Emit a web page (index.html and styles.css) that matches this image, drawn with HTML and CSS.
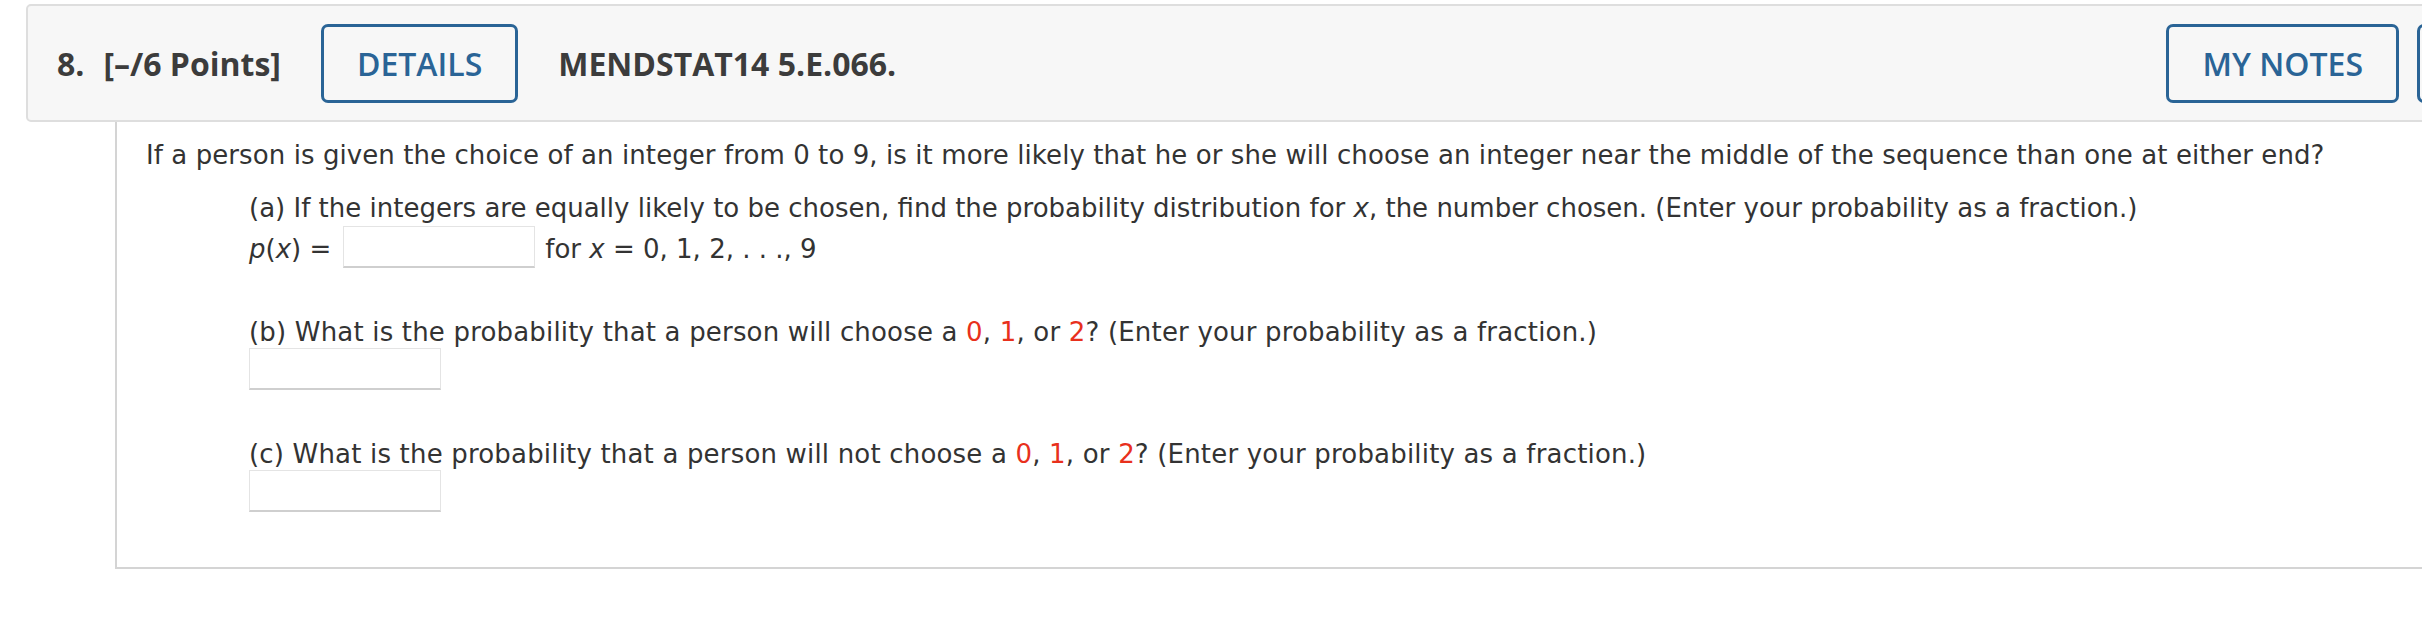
FILE: index.html
```html
<!DOCTYPE html>
<html>
<head>
<meta charset="utf-8">
<title>Question 8</title>
<link rel="stylesheet" href="styles.css">
</head>
<body>
<div class="question">
  <div class="qhead">
    <span class="qnum">8.</span>
    <span class="qpts">[–/6 Points]</span>
    <button class="btn btn-details">DETAILS</button>
    <span class="qcode">MENDSTAT14 5.E.066.</span>
    <div class="tools">
      <button class="btn">MY NOTES</button>
      <button class="btn btn-cut" aria-label="Ask Your Teacher"></button>
    </div>
  </div>
  <div class="qbody">
    <p class="intro">If a person is given the choice of an integer from 0 to 9, is it more likely that he or she will choose an integer near the middle of the sequence than one at either end?</p>
    <div class="part part-a">
      <p class="ptext">(a) If the integers are equally likely to be chosen, find the probability distribution for <i>x</i>, the number chosen. (Enter your probability as a fraction.)</p>
      <div class="ansrow">
        <span class="lbl"><i>p</i>(<i>x</i>) =</span>
        <input class="ans ans-inline" type="text">
        <span class="lbl lbl-after">for <i>x</i> = 0, 1, 2, . . ., 9</span>
      </div>
    </div>
    <div class="part part-b">
      <p class="ptext ptext-wide">(b) What is the probability that a person will choose a <span class="hl">0</span>, <span class="hl">1</span>, or <span class="hl">2</span>? (Enter your probability as a fraction.)</p>
      <input class="ans" type="text">
    </div>
    <div class="part part-c">
      <p class="ptext ptext-wide">(c) What is the probability that a person will not choose a <span class="hl">0</span>, <span class="hl">1</span>, or <span class="hl">2</span>? (Enter your probability as a fraction.)</p>
      <input class="ans" type="text">
    </div>
  </div>
</div>
</body>
</html>
```
FILE: styles.css
```css
html, body {
  margin: 0;
  padding: 0;
  background: #ffffff;
  overflow: hidden;
}

body {
  width: 2422px;
  height: 628px;
}

.qhead {
  box-sizing: border-box;
  margin: 4px 0 0 26px;
  width: 2773px;
  height: 118px;
  display: flex;
  align-items: center;
  padding: 0 20px 0 29px;
  background: #f7f7f7;
  border: 2px solid #dedede;
  border-radius: 5px;
  font-family: "Open Sans", "Liberation Sans", sans-serif;
  font-size: 32px;
  color: #3c3c3c;
}

.qnum,
.qpts,
.qcode {
  font-weight: 700;
  white-space: nowrap;
}

.qpts {
  margin-left: 19px;
}

.btn {
  box-sizing: border-box;
  height: 79px;
  padding: 0 33px;
  border: 3px solid #2a6496;
  border-radius: 7px;
  background: transparent;
  color: #2a6496;
  font-family: "Open Sans", "Liberation Sans", sans-serif;
  font-size: 32px;
  font-weight: 600;
  white-space: nowrap;
  cursor: pointer;
}

.btn-details {
  margin-left: 40px;
}

.qcode {
  margin-left: 40px;
}

.tools {
  margin-left: auto;
  display: flex;
  gap: 18px;
}

.btn-cut {
  width: 360px;
}

.qbody {
  margin-left: 115px;
  padding: 18px 0 55px 29px;
  border-left: 2px solid #d4d4d4;
  border-bottom: 2px solid #d4d4d4;
  font-family: "DejaVu Sans", Verdana, sans-serif;
  font-size: 26px;
  line-height: 30px;
  color: #333333;
}

.intro,
.ptext {
  margin: 0;
  white-space: nowrap;
}

.intro {
  letter-spacing: 0.08px;
}

.ptext-wide {
  letter-spacing: 0.18px;
}

.part {
  padding-left: 103px;
}

.part-a {
  margin-top: 23px;
}

.part-a .ansrow {
  margin-top: 3px;
}

.part-b,
.part-c {
  margin-top: 49px;
}

.part-b .ans,
.part-c .ans {
  display: block;
  margin-top: 1px;
}

.ansrow {
  display: flex;
  align-items: flex-start;
}

.lbl {
  padding-top: 8px;
  white-space: nowrap;
}

.ans {
  box-sizing: border-box;
  width: 192px;
  height: 42px;
  margin: 0;
  padding: 0 8px;
  background: #ffffff;
  border: 1px solid #e4e4e4;
  border-bottom: 2px solid #cfcfcf;
  font-family: "DejaVu Sans", Verdana, sans-serif;
  font-size: 24px;
}

.ans-inline {
  margin-left: 12px;
}

.lbl-after {
  margin-left: 10px;
}

.hl {
  color: #e8301c;
}
```
